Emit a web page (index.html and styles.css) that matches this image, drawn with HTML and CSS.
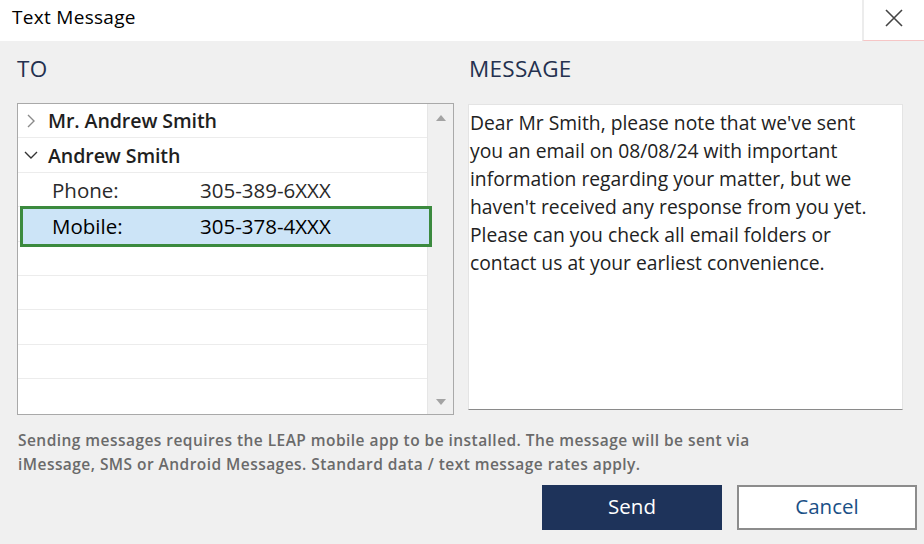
FILE: index.html
```html
<!DOCTYPE html>
<html>
<head>
<meta charset="utf-8">
<link rel="stylesheet" href="styles.css">
</head>
<body>
<div class="dialog">
  <div class="titlebar">
    <div class="title">Text Message</div>
    <div class="close">
      <svg width="20" height="20" viewBox="0 0 20 20"><path d="M2 2 L18 18 M18 2 L2 18" stroke="#444" stroke-width="1.6" fill="none"/></svg>
    </div>
  </div>
  <div class="content">
    <div class="columns">
      <div class="col col-left">
        <div class="heading">TO</div>
        <div class="listbox">
          <div class="rows">
            <div class="row group">
              <span class="chev">
                <svg width="12" height="14" viewBox="0 0 12 14"><path d="M3 1 L9 7 L3 13" stroke="#8a8a8a" stroke-width="1.4" fill="none"/></svg>
              </span>
              <span class="name">Mr. Andrew Smith</span>
            </div>
            <div class="row group">
              <span class="chev">
                <svg width="14" height="10" viewBox="0 0 14 10"><path d="M1 2 L7 8 L13 2" stroke="#333" stroke-width="1.4" fill="none"/></svg>
              </span>
              <span class="name">Andrew Smith</span>
            </div>
            <div class="row item">
              <span class="label">Phone:</span>
              <span class="value">305-389-6XXX</span>
            </div>
            <div class="row item selected">
              <span class="label">Mobile:</span>
              <span class="value">305-378-4XXX</span>
            </div>
            <div class="row"></div>
            <div class="row"></div>
            <div class="row"></div>
            <div class="row"></div>
            <div class="row last"></div>
          </div>
          <div class="scrollbar">
            <svg class="arrow" width="10" height="8" viewBox="0 0 10 8"><path d="M0 7 L5 1 L10 7 Z" fill="#a3a3a3"/></svg>
            <svg class="arrow" width="10" height="8" viewBox="0 0 10 8"><path d="M0 1 L5 7 L10 1 Z" fill="#a3a3a3"/></svg>
          </div>
        </div>
      </div>
      <div class="col col-right">
        <div class="heading">MESSAGE</div>
        <div class="message">Dear Mr Smith, please note that we've sent<br>you an email on 08/08/24 with important<br>information regarding your matter, but we<br>haven't received any response from you yet.<br>Please can you check all email folders or<br>contact us at your earliest convenience.</div>
      </div>
    </div>
    <div class="note">Sending messages requires the LEAP mobile app to be installed. The message will be sent via<br>iMessage, SMS or Android Messages. Standard data / text message rates apply.</div>
    <div class="buttons">
      <button class="btn primary">Send</button>
      <button class="btn secondary">Cancel</button>
    </div>
  </div>
</div>
</body>
</html>
```

FILE: styles.css
```css
* { box-sizing: border-box; }
html, body {
  margin: 0;
  padding: 0;
}
body {
  width: 924px;
  height: 544px;
  overflow: hidden;
  background: #f0f0f0;
  font-family: "Open Sans", "Noto Sans", sans-serif;
  color: #1e1e1e;
}
.dialog {
  width: 924px;
  height: 544px;
  display: flex;
  flex-direction: column;
}
.titlebar {
  height: 41px;
  background: #ffffff;
  display: flex;
  align-items: stretch;
  justify-content: space-between;
}
.title {
  padding-left: 12px;
  padding-top: 4px;
  font-size: 19px;
  color: #000;
  letter-spacing: 0.3px;
}
.close {
  width: 62px;
  border-left: 2px solid #ececec;
  border-bottom: 1px solid #f6c6c6;
  display: flex;
  align-items: center;
  justify-content: center;
  padding-bottom: 4px;
}
.content {
  flex: 1;
  padding: 0 7px 0 17px;
  display: flex;
  flex-direction: column;
}
.columns {
  display: flex;
  gap: 14px;
}
.col-left { width: 437px; }
.col-right { width: 435px; }
.heading {
  font-size: 22.5px;
  color: #24314f;
  height: 62px;
  padding-top: 12px;
  letter-spacing: 0.3px;
}
.col-right .heading { padding-left: 1px; }
.listbox {
  height: 312px;
  border: 1px solid #a9a9a9;
  background: #ffffff;
  display: flex;
}
.rows {
  flex: 1;
  display: flex;
  flex-direction: column;
}
.row {
  height: 34.4px;
  border-bottom: 1.5px solid #ececec;
  display: flex;
  align-items: center;
  font-size: 20.5px;
  position: relative;
}
.row.last { border-bottom: none; flex: 1; }
.group { font-weight: 600; padding-left: 1px; font-size: 19.6px; letter-spacing: -0.1px; }
.chev {
  width: 23px;
  display: flex;
  align-items: center;
  justify-content: center;
}
.group .name { padding-left: 6px; color: #1f1f1f; }
.item { padding-left: 34px; color: #2a2a2a; padding-top: 2px; }
.item .label { width: 148px; }
.selected { color: #000; padding-top: 0; }
.selected::after {
  content: "";
  position: absolute;
  left: 2px;
  right: -5px;
  top: -1px;
  bottom: -6px;
  border: 3px solid #3b8a3e;
  background: rgba(204, 228, 247, 1);
  z-index: 0;
}
.selected span { position: relative; z-index: 1; top: 2px; }
.scrollbar {
  width: 26px;
  background: #f0f0f0;
  border-left: 1px solid #e6e6e6;
  display: flex;
  flex-direction: column;
  justify-content: space-between;
  align-items: center;
  padding: 10px 0 8px;
}
.message {
  height: 306px;
  background: #ffffff;
  border: 1px solid #e4e4e4;
  border-bottom: 1px solid #8a8a8a;
  margin-top: 1px;
  padding: 4px 0 0 1px;
  font-size: 19.3px;
  line-height: 28px;
  color: #222;
  white-space: nowrap;
  overflow: hidden;
}
.note {
  margin-top: 13px;
  padding-left: 1px;
  font-size: 15.5px;
  line-height: 24px;
  font-weight: 600;
  color: #6a6a6a;
  letter-spacing: 0.45px;
  white-space: nowrap;
}
.buttons {
  margin-top: 9px;
  display: flex;
  justify-content: flex-end;
  gap: 15px;
}
.btn {
  width: 180px;
  height: 45px;
  font-family: "Open Sans", "Noto Sans", sans-serif;
  font-size: 20.5px;
  cursor: pointer;
  padding: 0 0 3px;
}
.primary {
  background: #1e335a;
  color: #ffffff;
  border: none;
}
.secondary {
  background: #ffffff;
  color: #1a4f86;
  border: 2px solid #8c8c8c;
}
```
